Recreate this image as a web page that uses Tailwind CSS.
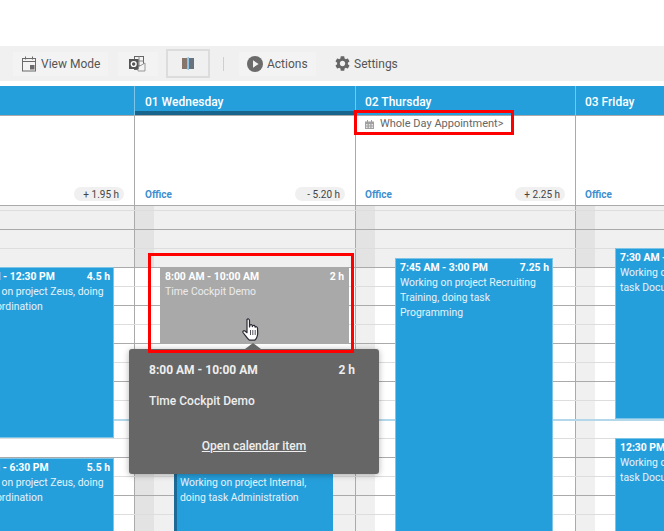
<!DOCTYPE html>
<html lang="en">
<head>
  <meta charset="UTF-8" />
  <title>Calendar</title>
  <script src="https://cdn.jsdelivr.net/npm/@tailwindcss/browser@4"></script>
</head>
<body>
  <div class="relative w-[664px] h-[531px] overflow-hidden bg-white [font-family:Roboto,sans-serif] text-[12px]">

    <!-- toolbar -->
    <div class="mt-[46px] h-[35px] bg-[#f0f0f0] flex items-center pl-[13px] text-[#555]">
      <div class="w-[95px] h-[24px] bg-[#f3f3f3] flex items-center pl-[9px] gap-[4px]">
        <svg width="15" height="16" viewBox="0 0 15 16" fill="none"><rect x="0.5" y="2.5" width="13" height="12.5" stroke="#6b6b6b"/><path d="M0.5 5.5h13M3.5 0.5v3M10.5 0.5v3" stroke="#6b6b6b"/><rect x="8" y="9" width="4.5" height="4.5" fill="#6b6b6b"/></svg>
        <span>View Mode</span>
      </div>
      <div class="ml-[10px] w-[40px] h-[24px] bg-[#f3f3f3] flex items-center justify-center">
        <svg width="18" height="16" viewBox="0 0 18 16"><rect x="5.500" y="0.500" width="9" height="13" fill="#f3f3f3" stroke="#666"/><path d="M10 0.500v13M5.500 5h9M5.500 9.500h9" stroke="#888"/><path d="M9 11l7 -4v8h-7z" fill="#f3f3f3" stroke="#999"/><rect x="0" y="3" width="9.500" height="10" fill="#555"/><circle cx="4.700" cy="8" r="2.400" fill="none" stroke="#fff" stroke-width="1.400"/></svg>
      </div>
      <div class="ml-[8px] w-[44px] h-[29px] border-2 border-[#dcdcdc] flex items-center justify-center">
        <svg width="13" height="13" viewBox="0 0 13 13"><rect x="0" y="1" width="5.500" height="11" fill="#86756a"/><rect x="7" y="1" width="5" height="11" fill="#66727e"/><rect x="5.500" y="0" width="1.500" height="13" fill="#8fc4e4"/></svg>
      </div>
      <div class="ml-[13px] w-px h-[14px] bg-[#cfcfcf]"></div>
      <div class="ml-[15px] w-[77px] h-[24px] bg-[#f3f3f3] flex items-center pl-[8px] gap-[4px]">
        <svg width="16" height="16" viewBox="0 0 16 16"><circle cx="8" cy="8" r="8" fill="#6b6b6b"/><path d="M6 4.200l5.600 3.800L6 11.800z" fill="#f3f3f3"/></svg>
        <span>Actions</span>
      </div>
      <div class="ml-[19px] flex items-center gap-[4px]">
        <svg width="15" height="15" viewBox="2 2 20 20" fill="#666"><path d="M19.14 12.94c.04-.3.06-.61.06-.94 0-.32-.02-.64-.07-.94l2.03-1.58a.49.49 0 0 0 .12-.61l-1.92-3.32a.488.488 0 0 0-.59-.22l-2.39.96c-.5-.38-1.03-.7-1.62-.94l-.36-2.54a.484.484 0 0 0-.48-.41h-3.84c-.24 0-.43.17-.47.41l-.36 2.54c-.59.24-1.13.57-1.62.94l-2.39-.96c-.22-.08-.47 0-.59.22L2.74 8.87c-.12.21-.08.47.12.61l2.03 1.58c-.05.3-.09.63-.09.94s.02.64.07.94l-2.03 1.58a.49.49 0 0 0-.12.61l1.92 3.32c.12.22.37.29.59.22l2.39-.96c.5.38 1.03.7 1.62.94l.36 2.54c.05.24.24.41.48.41h3.84c.24 0 .44-.17.47-.41l.36-2.54c.59-.24 1.13-.56 1.62-.94l2.39.96c.22.08.47 0 .59-.22l1.92-3.32c.12-.22.07-.47-.12-.61l-2.01-1.58zM12 15.6c-1.98 0-3.6-1.62-3.6-3.6s1.62-3.6 3.6-3.6 3.6 1.62 3.6 3.6-1.62 3.6-3.6 3.6z"/></svg>
        <span>Settings</span>
      </div>
    </div>

    <!-- day header -->
    <div class="mt-[5px] h-[30px] bg-[#259fdb] border-b border-[#aaa] flex text-white text-[12px] font-medium">
      <div class="w-[134px]"></div>
      <div class="relative w-[221px] border-l border-[#7cc4e8] pl-[10px] pt-[7px]">
        01 Wednesday
        <div class="absolute left-0 right-0 bottom-0 h-[4px] bg-[#17648c]"></div>
      </div>
      <div class="w-[220px] border-l border-[#7cc4e8] pl-[9px] pt-[7px]">02 Thursday</div>
      <div class="flex-1 border-l border-[#7cc4e8] pl-[9px] pt-[7px]">03 Friday</div>
    </div>

    <!-- whole day row -->
    <div class="h-[90px] flex border-b border-[#aaa] text-[10px]">
      <div class="w-[134px] flex items-end justify-end pb-[4px] pr-[10px]">
        <span class="w-[50px] h-[14px] leading-[15px] bg-[#f0f0f0] rounded-[7px] text-right pr-[5px] text-[#444]">+ 1.95 h</span>
      </div>
      <div class="w-[221px] border-l border-[#aaa] flex items-end justify-between pb-[4px] pl-[10px] pr-[10px]">
        <span class="font-bold text-[#3d8fd1] leading-[13px]">Office</span>
        <span class="w-[50px] h-[14px] leading-[15px] bg-[#f0f0f0] rounded-[7px] text-right pr-[5px] text-[#444]">- 5.20 h</span>
      </div>
      <div class="relative w-[220px] border-l border-[#aaa] flex items-end justify-between pb-[4px] pl-[9px] pr-[10px]">
        <div class="absolute left-[9px] top-[1px] flex items-center gap-[6px] text-[11px] leading-[14px] text-[#666] whitespace-nowrap">
          <svg width="9" height="9" viewBox="0 0 9 9" fill="#a0a0a0"><path d="M0 1.500h9V9H0z"/><path d="M2 0h1v2H2zM6 0h1v2H6z"/><path d="M1 4h1.500v1.500H1zM3.800 4h1.500v1.500H3.800zM6.500 4H8v1.500H6.500zM1 6.500h1.500V8H1zM3.800 6.500h1.500V8H3.800zM6.500 6.500H8V8H6.500z" fill="#e4e4e4"/></svg>
          <span>Whole Day Appointment&gt;</span>
        </div>
        <span class="font-bold text-[#3d8fd1] leading-[13px]">Office</span>
        <span class="w-[50px] h-[14px] leading-[15px] bg-[#f0f0f0] rounded-[7px] text-right pr-[5px] text-[#444]">+ 2.25 h</span>
      </div>
      <div class="flex-1 border-l border-[#aaa] flex items-end pb-[4px] pl-[9px]">
        <span class="font-bold text-[#3d8fd1] leading-[13px]">Office</span>
      </div>
    </div>

    <!-- time grid -->
    <div class="relative h-[325px] flex text-[10.4px] leading-[15px]">
      <div class="absolute inset-0 z-[1] bg-[linear-gradient(to_bottom,#aaa_0,#aaa_1px,transparent_1px,transparent_19px,#ddd_19px,#ddd_20px,transparent_20px)] bg-[size:100%_38px] bg-[position:0_-15px]"></div>
      <div class="absolute left-0 right-0 top-[213px] h-[2px] z-[1] bg-[#b3d8ec]"></div>

      <!-- previous day -->
      <div class="relative w-[134px] overflow-hidden">
        <div class="h-[61px] bg-[#f0f0f0]"></div>
        <div class="absolute z-[2] left-[-44px] w-[158px] top-[61px] h-[171px] bg-[#259fdb] border border-[#7cc4e8] text-white pl-[4px] pr-[3px] pt-px">
          <div class="flex justify-between font-bold"><span>8:00 AM - 12:30 PM</span><span>4.5 h</span></div>
          <div class="text-[#e4f2fa]">Working on project Zeus, doing task Coordination</div>
        </div>
        <div class="absolute z-[2] left-[-44px] w-[158px] top-[252px] h-[90px] bg-[#259fdb] border border-[#7cc4e8] text-white pl-[4px] pr-[3px] pt-px">
          <div class="flex justify-between font-bold"><span>1:00 PM - 6:30 PM</span><span>5.5 h</span></div>
          <div class="text-[#e4f2fa]">Working on project Zeus, doing task Coordination</div>
        </div>
      </div>

      <!-- 01 Wednesday -->
      <div class="relative w-[221px] border-l border-[#aaa] flex flex-col">
        <div class="h-[61px] bg-[#f0f0f0]"><div class="w-[19px] h-full bg-[#e3e3e3]"></div></div>
        <div class="h-[153px]"></div>
        <div class="flex-1 bg-[#f0f0f0]"><div class="w-[19px] h-full bg-[#e3e3e3]"></div></div>
        <div class="absolute z-[2] left-[25px] w-[189px] top-[61px] h-[76px] bg-[#a9a9a9] text-white px-[5px] pt-[2px]">
          <div class="flex justify-between font-bold"><span>8:00 AM - 10:00 AM</span><span>2 h</span></div>
          <div class="text-[#ececec]">Time Cockpit Demo</div>
        </div>
        <div class="absolute z-[2] left-[39px] w-[159px] top-[252px] h-[90px] bg-[#259fdb] border-l-[3px] border-[#1d6a94] text-white pl-[3px] pr-[5px] pt-[2px]">
          <div class="flex justify-between font-bold"><span>1:00 PM - 6:00 PM</span><span>5 h</span></div>
          <div class="text-[#e4f2fa]">Working on project Internal, doing task Administration</div>
        </div>
      </div>

      <!-- 02 Thursday -->
      <div class="relative w-[220px] border-l border-[#aaa] flex flex-col">
        <div class="h-[61px] bg-[#f0f0f0]"><div class="w-[19px] h-full bg-[#e3e3e3]"></div></div>
        <div class="flex-1"><div class="w-[19px] h-full bg-[#f0f0f0]"></div></div>
        <div class="absolute z-[2] left-[39px] w-[158px] top-[52px] h-[290px] bg-[#259fdb] border border-[#7cc4e8] text-white pl-[4px] pr-[3px] pt-px">
          <div class="flex justify-between font-bold"><span>7:45 AM - 3:00 PM</span><span>7.25 h</span></div>
          <div class="text-[#e4f2fa]">Working on project Recruiting Training, doing task Programming</div>
        </div>
      </div>

      <!-- 03 Friday -->
      <div class="relative flex-1 border-l border-[#aaa] flex flex-col overflow-hidden">
        <div class="h-[61px] bg-[#f0f0f0]"><div class="w-[19px] h-full bg-[#e3e3e3]"></div></div>
        <div class="flex-1"><div class="w-[19px] h-full bg-[#f0f0f0]"></div></div>
        <div class="absolute z-[2] left-[39px] w-[158px] top-[42px] h-[171px] bg-[#259fdb] border border-[#7cc4e8] text-white pl-[4px] pr-[3px] pt-px">
          <div class="flex justify-between font-bold"><span>7:30 AM - 12:00 PM</span><span>4.5 h</span></div>
          <div class="text-[#e4f2fa]">Working on project Office, doing task Documentation</div>
        </div>
        <div class="absolute z-[2] left-[39px] w-[158px] top-[232px] h-[110px] bg-[#259fdb] border border-[#7cc4e8] text-white pl-[4px] pr-[3px] pt-px">
          <div class="flex justify-between font-bold"><span>12:30 PM - 5:00 PM</span><span>4.5 h</span></div>
          <div class="text-[#e4f2fa]">Working on project Office, doing task Documentation</div>
        </div>
      </div>
    </div>

    <!-- popup -->
    <div class="absolute z-10 left-[129px] top-[349px] w-[250px] h-[125px] bg-[#666] rounded-[3px] shadow-[0_1px_6px_rgba(0,0,0,0.3)] text-[#eee] text-[12px] px-[20px] pt-[14px] flex flex-col">
      <div class="absolute left-[116px] top-[-6px] w-0 h-0 border-x-[8px] border-x-transparent border-b-[6px] border-b-[#666]"></div>
      <div class="flex justify-between font-bold leading-[14px] pr-[4px]"><span>8:00 AM - 10:00 AM</span><span>2 h</span></div>
      <div class="mt-[17px] font-medium leading-[14px]">Time Cockpit Demo</div>
      <a class="mt-[31px] text-center font-medium underline leading-[14px]">Open calendar item</a>
    </div>

    <!-- red markers -->
    <div class="absolute z-20 left-[148px] top-[253px] w-[206px] h-[100px] border-[3px] border-[#f00]"></div>
    <div class="absolute z-20 left-[354px] top-[110px] w-[160px] h-[25px] border-[3px] border-[#f00]"></div>

    <!-- mouse cursor -->
    <svg class="absolute z-30 left-[242px] top-[318px]" width="18" height="25" viewBox="0 0 18 25">
      <path d="M5 1.500c1-1 2.300-.5 2.500 1V9l.6-2c.6-.8 1.800-.6 2 .4l.3 1.200.5-1c.7-.6 1.800-.3 2 .6l.2 1 .5-.4c.8-.3 1.800.2 1.900 1.200l.2 5c0 3-1 5.500-3 7.200H7.500c-1.500-1-3-3-4.300-4.800L1 14.500c-.6-1.200.8-2.500 2-1.500l2 1.700z" fill="#fff" stroke="#2a2a35" stroke-width="1.200" stroke-linejoin="round"/>
      <path d="M8.500 12v5M10.800 12v5M13.200 12v5" stroke="#2a2a35" stroke-width="0.800"/>
    </svg>
  </div>
</body>
</html>
